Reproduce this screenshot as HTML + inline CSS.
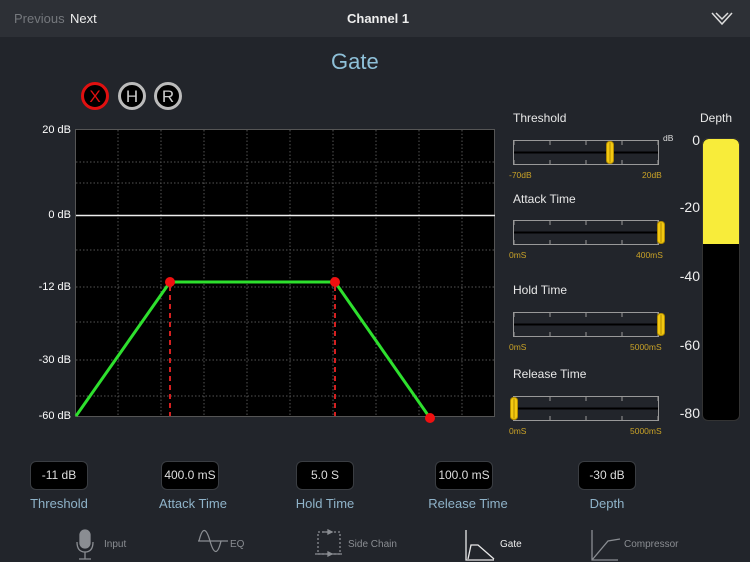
<!DOCTYPE html>
<html><head><meta charset="utf-8"><style>
*{margin:0;padding:0;box-sizing:border-box}
body{width:750px;height:562px;background:#22252b;font-family:"Liberation Sans",sans-serif;position:relative;overflow:hidden;color:#fff}
.a{position:absolute;white-space:nowrap}
.hdr{position:absolute;left:0;top:0;width:750px;height:37px;background:#2d3036}
.st{font-size:12px;color:#e8e8e8}
.yl{font-size:8.5px;color:#c9a227}
.dl{font-size:14px;color:#eee;text-align:right;width:30px}
.vb{position:absolute;top:461px;height:29px;width:58px;background:#000;border:1px solid #3a3d42;border-radius:6px;color:#ddd;font-size:12px;text-align:center;line-height:27px}
.vl{position:absolute;top:496px;font-size:13px;color:#8fb3c9;text-align:center;width:120px}
.tb{font-size:10px;color:#8a8d92}
.gl{font-size:11px;color:#fff;text-align:right;width:42px}
</style></head><body>
<div class="hdr"></div>
<div class="a" style="left:14px;top:11px;font-size:13px;color:#75787d">Previous</div>
<div class="a" style="left:70px;top:11px;font-size:13px;color:#eee">Next</div>
<div class="a" style="left:347px;top:11px;font-size:13px;color:#eee;font-weight:bold">Channel 1</div>
<svg class="a" style="left:710px;top:11px" width="24" height="16"><polyline points="2,2 12,13 22,2" fill="none" stroke="#ddd" stroke-width="1.5"/><polyline points="6,2 12,8 18,2" fill="none" stroke="#ddd" stroke-width="1.5"/></svg>
<div class="a" style="left:331px;top:49px;font-size:22px;color:#8ec0d8">Gate</div>
<svg class="a" style="left:80px;top:81px" width="105" height="30">
<circle cx="15" cy="15" r="12.5" fill="#000" stroke="#e01010" stroke-width="3"/>
<text x="15" y="21" font-size="17" fill="#e01010" text-anchor="middle" font-family="Liberation Sans">X</text>
<circle cx="52" cy="15" r="12.5" fill="#000" stroke="#bbb" stroke-width="3"/>
<text x="52" y="21" font-size="17" fill="#ccc" text-anchor="middle" font-family="Liberation Sans">H</text>
<circle cx="88" cy="15" r="12.5" fill="#000" stroke="#bbb" stroke-width="3"/>
<text x="88" y="21" font-size="17" fill="#ccc" text-anchor="middle" font-family="Liberation Sans">R</text>
</svg>
<div class="a gl" style="left:29px;top:124px">20 dB</div>
<div class="a gl" style="left:29px;top:209px">0 dB</div>
<div class="a gl" style="left:29px;top:281px">-12 dB</div>
<div class="a gl" style="left:29px;top:354px">-30 dB</div>
<div class="a gl" style="left:29px;top:410px">-60 dB</div>
<svg class="a" style="left:0;top:0" width="500" height="430">
<rect x="75.5" y="129.5" width="419" height="287" fill="#000" stroke="#555" stroke-width="1"/>
<g stroke="#555" stroke-width="1" stroke-dasharray="1.5,2">
<line x1="118" y1="130" x2="118" y2="416"/><line x1="161" y1="130" x2="161" y2="416"/><line x1="204" y1="130" x2="204" y2="416"/><line x1="247" y1="130" x2="247" y2="416"/><line x1="290" y1="130" x2="290" y2="416"/><line x1="333" y1="130" x2="333" y2="416"/><line x1="376" y1="130" x2="376" y2="416"/><line x1="419" y1="130" x2="419" y2="416"/><line x1="462" y1="130" x2="462" y2="416"/>
<line x1="76" y1="162" x2="494" y2="162"/><line x1="76" y1="183" x2="494" y2="183"/><line x1="76" y1="250" x2="494" y2="250"/><line x1="76" y1="287" x2="494" y2="287"/><line x1="76" y1="322" x2="494" y2="322"/><line x1="76" y1="360" x2="494" y2="360"/><line x1="76" y1="396" x2="494" y2="396"/>
</g>
<line x1="76" y1="215.5" x2="495" y2="215.5" stroke="#eee" stroke-width="1.5"/>
<g stroke="#d42020" stroke-width="2" stroke-dasharray="5,4"><line x1="170" y1="286" x2="170" y2="416"/><line x1="335" y1="286" x2="335" y2="416"/></g>
<polyline points="76,416 170,282 335,282 430,418" fill="none" stroke="#2ee02e" stroke-width="3"/>
<circle cx="170" cy="282" r="5" fill="#f01010"/><circle cx="335" cy="282" r="5" fill="#f01010"/><circle cx="430" cy="418" r="5" fill="#f01010"/>
</svg>
<div class="a st" style="left:513px;top:111px">Threshold</div>
<div class="a st" style="left:513px;top:192px">Attack Time</div>
<div class="a st" style="left:513px;top:283px">Hold Time</div>
<div class="a st" style="left:513px;top:367px">Release Time</div>
<div class="a" style="left:700px;top:111px;font-size:12px;color:#e8e8e8">Depth</div>
<div class="a" style="left:663px;top:133px;font-size:8.5px;color:#ddd">dB</div>
<svg class="a" style="left:505px;top:130px" width="170" height="300">
<defs><g id="sl"><rect x="8.5" y="0.5" width="145" height="24" fill="none" stroke="#999"/><rect x="9" y="1" width="144" height="23" fill="#22252b"/><line x1="9" y1="12.5" x2="153" y2="12.5" stroke="#000" stroke-width="2"/>
<g stroke="#999"><line x1="9" y1="1" x2="9" y2="5"/><line x1="45" y1="1" x2="45" y2="5"/><line x1="81" y1="1" x2="81" y2="5"/><line x1="117" y1="1" x2="117" y2="5"/><line x1="153" y1="1" x2="153" y2="5"/>
<line x1="9" y1="20" x2="9" y2="24"/><line x1="45" y1="20" x2="45" y2="24"/><line x1="81" y1="20" x2="81" y2="24"/><line x1="117" y1="20" x2="117" y2="24"/><line x1="153" y1="20" x2="153" y2="24"/></g></g>
<g id="th"><rect x="-3.5" y="-11" width="7" height="22" rx="3" fill="#f2c811" stroke="#b08a00"/><line x1="0" y1="-10" x2="0" y2="10" stroke="#b08a00"/></g></defs>
<use href="#sl" y="10"/><use href="#th" x="105" y="22.5"/>
<use href="#sl" y="90"/><use href="#th" x="156" y="102.5"/>
<use href="#sl" y="182"/><use href="#th" x="156" y="194.5"/>
<use href="#sl" y="266"/><use href="#th" x="9" y="278.5"/>
</svg>
<div class="a yl" style="left:509px;top:170px">-70dB</div><div class="a yl" style="left:642px;top:170px">20dB</div>
<div class="a yl" style="left:509px;top:250px">0mS</div><div class="a yl" style="left:636px;top:250px">400mS</div>
<div class="a yl" style="left:509px;top:342px">0mS</div><div class="a yl" style="left:630px;top:342px">5000mS</div>
<div class="a yl" style="left:509px;top:426px">0mS</div><div class="a yl" style="left:630px;top:426px">5000mS</div>
<div class="a" style="left:702px;top:138px;width:38px;height:283px;background:#000;border:1px solid #333;border-radius:6px;overflow:hidden"><div style="height:105px;background:#f8ec3a;border-radius:6px 6px 0 0"></div></div>
<div class="a dl" style="left:670px;top:132px">0</div>
<div class="a dl" style="left:670px;top:199px">-20</div>
<div class="a dl" style="left:670px;top:268px">-40</div>
<div class="a dl" style="left:670px;top:337px">-60</div>
<div class="a dl" style="left:670px;top:405px">-80</div>
<div class="vb" style="left:30px">-11 dB</div><div class="vl" style="left:-1px">Threshold</div>
<div class="vb" style="left:161px">400.0 mS</div><div class="vl" style="left:133px">Attack Time</div>
<div class="vb" style="left:296px">5.0 S</div><div class="vl" style="left:265px">Hold Time</div>
<div class="vb" style="left:435px">100.0 mS</div><div class="vl" style="left:408px">Release Time</div>
<div class="vb" style="left:578px">-30 dB</div><div class="vl" style="left:547px">Depth</div>
<svg class="a" style="left:70px;top:528px" width="640" height="34" fill="none" stroke="#8a8d92" stroke-width="1.3">
<rect x="10" y="2" width="10" height="18" rx="5" fill="#8a8d92"/><path d="M7,14 Q7,24 15,24 Q23,24 23,14 M15,24 V31 M9,31 H21"/>
<path d="M129,13 Q134,-8 140,13 Q146,34 151,13 M128,13 H158"/>
<g stroke-dasharray="2,2"><rect x="248" y="4" width="22" height="22"/></g><path d="M245,26 H272 M252,4 H262 M252,26 H262"/><path d="M258,2 l4,2 -4,2z M258,24 l4,2 -4,2z" fill="#8a8d92"/>
<path d="M396,2 V32 H424 M398,31 L401,17 L408,17 L424,31" stroke="#e8e8e8"/>
<path d="M522,2 V32 H548 M522,32 L538,13 L550,11"/>
</svg>
<div class="a tb" style="left:104px;top:539px">Input</div>
<div class="a tb" style="left:230px;top:539px">EQ</div>
<div class="a tb" style="left:348px;top:539px">Side Chain</div>
<div class="a tb" style="left:500px;top:539px;color:#eee">Gate</div>
<div class="a tb" style="left:624px;top:539px">Compressor</div>
</body></html>
